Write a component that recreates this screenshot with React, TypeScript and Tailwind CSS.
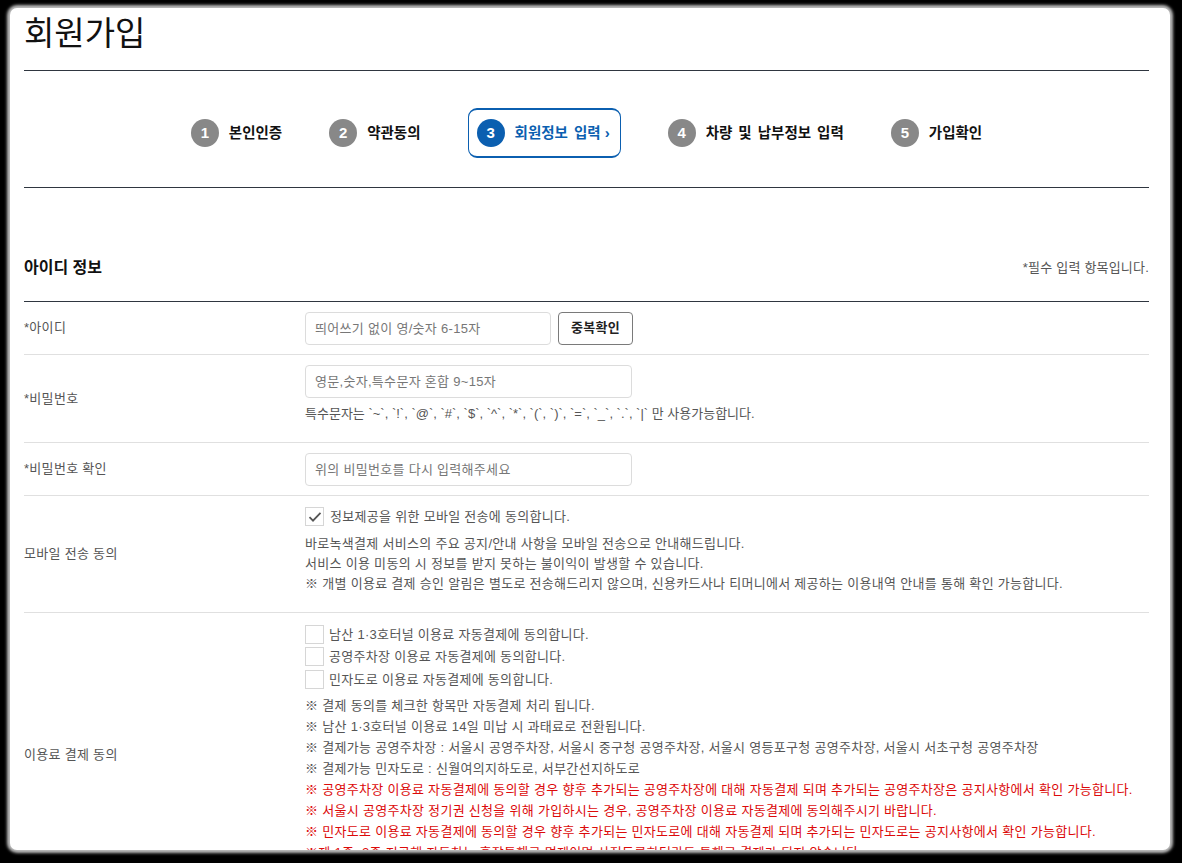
import React from "react";

const FONT = "font-['Liberation_Sans','Noto_Sans_CJK_KR',sans-serif]";

function Step({ n, label, active }: { n: number; label: string; active?: boolean }) {
  if (active) {
    return (
      <div className="flex items-center h-[50px] pl-[8px] pr-[10px] rounded-[9px] border border-y-2 border-[#0b5fb0]">
        <span className="w-[28px] h-[28px] rounded-full bg-[#0b5fb0] text-white text-[15px] font-bold flex items-center justify-center">{n}</span>
        <span className="ml-[10px] text-[14.5px] font-bold text-[#0b5fb0] leading-[20px] [word-spacing:2px]">{label}</span>
        <span className="ml-[4px] text-[15px] font-bold text-[#0b5fb0] leading-[20px]">›</span>
      </div>
    );
  }
  return (
    <div className="flex items-center h-[50px]">
      <span className="w-[28px] h-[28px] rounded-full bg-[#888] text-white text-[15px] font-bold flex items-center justify-center">{n}</span>
      <span className="ml-[10px] text-[14.5px] font-bold text-[#111] leading-[20px] [word-spacing:2px]">{label}</span>
    </div>
  );
}

function TextInput({ placeholder, w }: { placeholder: string; w: string }) {
  return (
    <input
      readOnly
      placeholder={placeholder}
      className={`${w} h-[33px] border border-[#dcdcdc] rounded-[4px] px-[9px] text-[13px] tracking-[0.3px] text-[#333] placeholder:text-[#777] outline-none bg-white`}
    />
  );
}

function Box({ checked }: { checked?: boolean }) {
  return (
    <span className="w-[19px] h-[19px] border border-[#d6d6d6] bg-white flex items-center justify-center shrink-0">
      {checked && (
        <svg width="14" height="12" viewBox="0 0 14 12" fill="none">
          <path d="M1.5 6.2 L5 9.7 L12.5 1.8" stroke="#555" strokeWidth="1.8" />
        </svg>
      )}
    </span>
  );
}

export default function App() {
  const notesGray = [
    "※ 결제 동의를 체크한 항목만 자동결제 처리 됩니다.",
    "※ 남산 1·3호터널 이용료 14일 미납 시 과태료로 전환됩니다.",
    "※ 결제가능 공영주차장 : 서울시 공영주차장, 서울시 중구청 공영주차장, 서울시 영등포구청 공영주차장, 서울시 서초구청 공영주차장",
    "※ 결제가능 민자도로 : 신월여의지하도로, 서부간선지하도로",
  ];
  const notesRed = [
    "※ 공영주차장 이용료 자동결제에 동의할 경우 향후 추가되는 공영주차장에 대해 자동결제 되며 추가되는 공영주차장은 공지사항에서 확인 가능합니다.",
    "※ 서울시 공영주차장 정기권 신청을 위해 가입하시는 경우, 공영주차장 이용료 자동결제에 동의해주시기 바랍니다.",
    "※ 민자도로 이용료 자동결제에 동의할 경우 향후 추가되는 민자도로에 대해 자동결제 되며 추가되는 민자도로는 공지사항에서 확인 가능합니다.",
    "※제 1종, 2종 저공해 자동차는 혼잡통행료 면제이며 사전등록하더라도 통행료 결제가 되지 않습니다.",
  ];
  const label = "w-[281px] shrink-0 flex items-center text-[13px] text-[#555]";

  return (
    <div className={`w-[1182px] h-[863px] bg-black overflow-hidden pt-[8px] pl-[10px] ${FONT}`}>
      <div className="w-[1160px] h-[842px] bg-white rounded-[7px] shadow-[0_0_3px_3px_#bcbcbc] overflow-hidden pl-[14px] pr-[21px]">
        {/* Title */}
        <div className="pt-[6px] pb-[16px] border-b border-[#2f3640]">
          <h1 className="text-[33px] leading-[40px] text-[#111]">회원가입</h1>
        </div>

        {/* Steps */}
        <div className="flex justify-center items-center gap-[47px] pt-[37px] pb-[29px] border-b border-[#2f3640]">
          <Step n={1} label="본인인증" />
          <Step n={2} label="약관동의" />
          <Step n={3} label="회원정보 입력" active />
          <Step n={4} label="차량 및 납부정보 입력" />
          <Step n={5} label="가입확인" />
        </div>

        {/* Section heading */}
        <div className="flex items-center justify-between pt-[68px] pb-[21px] border-b border-[#2f3640]">
          <h2 className="text-[16px] leading-[24px] font-bold text-[#111]">아이디 정보</h2>
          <span className="text-[13px] tracking-[0.2px] leading-[24px] text-[#555]">*필수 입력 항목입니다.</span>
        </div>

        <div className="text-[13px] tracking-[0.3px]">
          {/* Row: 아이디 */}
          <div className="flex border-b border-[#e0e0e0] h-[53px]">
            <div className={label}>*아이디</div>
            <div className="flex items-center gap-[7px]">
              <TextInput placeholder="띄어쓰기 없이 영/숫자 6-15자" w="w-[246px]" />
              <button className="h-[33px] w-[75px] border border-[#7a7a7a] rounded-[4px] bg-white text-[13px] font-bold text-[#222]">중복확인</button>
            </div>
          </div>

          {/* Row: 비밀번호 */}
          <div className="flex border-b border-[#e0e0e0]">
            <div className={label}>*비밀번호</div>
            <div className="pt-[10px] pb-[18px]">
              <TextInput placeholder="영문,숫자,특수문자 혼합 9~15자" w="w-[327px]" />
              <p className="mt-[6px] leading-[20px] text-[#555] tracking-[0px]">
                특수문자는 `~`, `!`, `@`, `#`, `$`, `^`, `*`, `(`, `)`, `=`, `_`, `.`, `|` 만 사용가능합니다.
              </p>
            </div>
          </div>

          {/* Row: 비밀번호 확인 */}
          <div className="flex border-b border-[#e0e0e0] h-[53px]">
            <div className={label}>*비밀번호 확인</div>
            <div className="flex items-center">
              <TextInput placeholder="위의 비밀번호를 다시 입력해주세요" w="w-[327px]" />
            </div>
          </div>

          {/* Row: 모바일 전송 동의 */}
          <div className="flex border-b border-[#e0e0e0]">
            <div className={label}>모바일 전송 동의</div>
            <div className="pt-[11px] pb-[18px] text-[#555]">
              <div className="flex items-center gap-[6px] h-[19px]">
                <Box checked />
                <span className="leading-[19px]">정보제공을 위한 모바일 전송에 동의합니다.</span>
              </div>
              <div className="mt-[8px] leading-[20px]">
                <p>바로녹색결제 서비스의 주요 공지/안내 사항을 모바일 전송으로 안내해드립니다.</p>
                <p>서비스 이용 미동의 시 정보를 받지 못하는 불이익이 발생할 수 있습니다.</p>
                <p>※ 개별 이용료 결제 승인 알림은 별도로 전송해드리지 않으며, 신용카드사나 티머니에서 제공하는 이용내역 안내를 통해 확인 가능합니다.</p>
              </div>
            </div>
          </div>

          {/* Row: 이용료 결제 동의 */}
          <div className="flex border-b border-[#e0e0e0]">
            <div className={label}>이용료 결제 동의</div>
            <div className="pt-[10px] pb-[33px] text-[#555]">
              {[
                "남산 1·3호터널 이용료 자동결제에 동의합니다.",
                "공영주차장 이용료 자동결제에 동의합니다.",
                "민자도로 이용료 자동결제에 동의합니다.",
              ].map((t) => (
                <div key={t} className="flex items-center gap-[5px] h-[22.5px]">
                  <Box />
                  <span className="leading-[19px]">{t}</span>
                </div>
              ))}
              <div className="mt-[4px] leading-[21px]">
                {notesGray.map((t) => (
                  <p key={t}>{t}</p>
                ))}
                {notesRed.map((t) => (
                  <p key={t} className="text-[#dc0a0a]">{t}</p>
                ))}
              </div>
            </div>
          </div>
        </div>
      </div>
    </div>
  );
}
